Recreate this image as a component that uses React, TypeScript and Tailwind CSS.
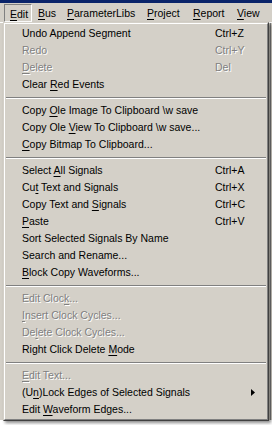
import React from "react";

type Item =
  | { sep: true }
  | {
      sep?: false;
      pre: string;
      u?: string;
      post?: string;
      sc?: string;
      dis?: boolean;
      sub?: boolean;
    };

const items: Item[] = [
  { pre: "Undo Append Segment", sc: "Ctrl+Z" },
  { pre: "Redo", sc: "Ctrl+Y", dis: true },
  { pre: "", u: "D", post: "elete", sc: "Del", dis: true },
  { pre: "Clear ", u: "R", post: "ed Events" },
  { sep: true },
  { pre: "Copy ", u: "O", post: "le Image To Clipboard \\w save" },
  { pre: "Copy Ole ", u: "V", post: "iew To Clipboard \\w save..." },
  { pre: "", u: "C", post: "opy Bitmap To Clipboard..." },
  { sep: true },
  { pre: "Select ", u: "A", post: "ll Signals", sc: "Ctrl+A" },
  { pre: "Cu", u: "t", post: " Text and Signals", sc: "Ctrl+X" },
  { pre: "Copy Text and ", u: "S", post: "ignals", sc: "Ctrl+C" },
  { pre: "", u: "P", post: "aste", sc: "Ctrl+V" },
  { pre: "Sort Selected Signals By Name" },
  { pre: "Search and Rename..." },
  { pre: "", u: "B", post: "lock Copy Waveforms..." },
  { sep: true },
  { pre: "Edit Cloc", u: "k", post: "...", dis: true },
  { pre: "", u: "I", post: "nsert Clock Cycles...", dis: true },
  { pre: "De", u: "l", post: "ete Clock Cycles...", dis: true },
  { pre: "Right Click Delete ", u: "M", post: "ode" },
  { sep: true },
  { pre: "", u: "E", post: "dit Text...", dis: true },
  { pre: "(U", u: "n", post: ")Lock Edges of Selected Signals", sub: true },
  { pre: "Edit ", u: "W", post: "aveform Edges..." },
];

const font = { fontFamily: '"Liberation Sans", Arial, sans-serif' };

function BarItem({ u, rest, w, active }: { u: string; rest: string; w: string; active?: boolean }) {
  return (
    <div className={`${w} h-[18px] leading-[18px] pl-[5px] ${active ? "border-t border-l border-t-[#808080] border-l-[#808080] border-r border-b border-r-white border-b-white pl-[4px] leading-[16px]" : ""}`}>
      <span className="underline underline-offset-[2px]">{u}</span>
      {rest}
    </div>
  );
}

export default function App() {
  return (
    <div className="relative w-[272px] h-[425px] bg-white overflow-hidden text-[10.5px] text-black" style={font}>
      <div className="h-[3px] bg-[#0a246a]" />
      <div className="h-[19px] bg-[#d4d0c8] flex items-start pt-[1px] pl-[4px]">
        <BarItem u="E" rest="dit" w="w-[28px]" active />
        <BarItem u="B" rest="us" w="w-[29px] pl-[6px]" />
        <BarItem u="P" rest="arameterLibs" w="w-[80px] pl-[6px]" />
        <BarItem u="P" rest="roject" w="w-[46px] pl-[6px]" />
        <BarItem u="R" rest="eport" w="w-[44px] pl-[6px]" />
        <BarItem u="V" rest="iew" w="w-[35px] pl-[6px]" />
      </div>
      <div className="h-[398px] bg-[#d4d0c8] border-t border-white flex justify-end">
        <div className="w-[2px] h-full border-l border-[#808080]" />
      </div>

      <div className="absolute left-[3px] top-[22px] w-[266px] bg-[#d4d0c8] border border-t-[#d4d0c8] border-l-[#d4d0c8] border-r-[#404040] border-b-[#404040] shadow-[2px_2px_3px_rgba(0,0,0,0.45)]">
        <div className="border border-t-white border-l-white border-r-[#808080] border-b-[#808080] p-[1px]">
          {items.map((it, i) =>
            it.sep ? (
              <div key={i} className="h-[9px] flex flex-col justify-center px-[0px]">
                <div className="h-px bg-[#808080]" />
                <div className="h-px bg-white" />
              </div>
            ) : (
              <div
                key={i}
                className={`relative h-[17px] leading-[17px] pl-[16px] flex whitespace-nowrap ${it.dis ? "text-[#808080] [text-shadow:1px_1px_0_#ffffff]" : "text-black"}`}
              >
                <div className="w-[193px]">
                  {it.pre}
                  {it.u && <span className="underline underline-offset-[2px]">{it.u}</span>}
                  {it.post}
                </div>
                {it.sc && <div>{it.sc}</div>}
                {it.sub && (
                  <svg className="absolute left-[245px] top-[5px]" width="4" height="7" viewBox="0 0 4 7">
                    <path d="M0 0 L4 3.5 L0 7 Z" fill="#000" />
                  </svg>
                )}
              </div>
            )
          )}
        </div>
      </div>
    </div>
  );
}
